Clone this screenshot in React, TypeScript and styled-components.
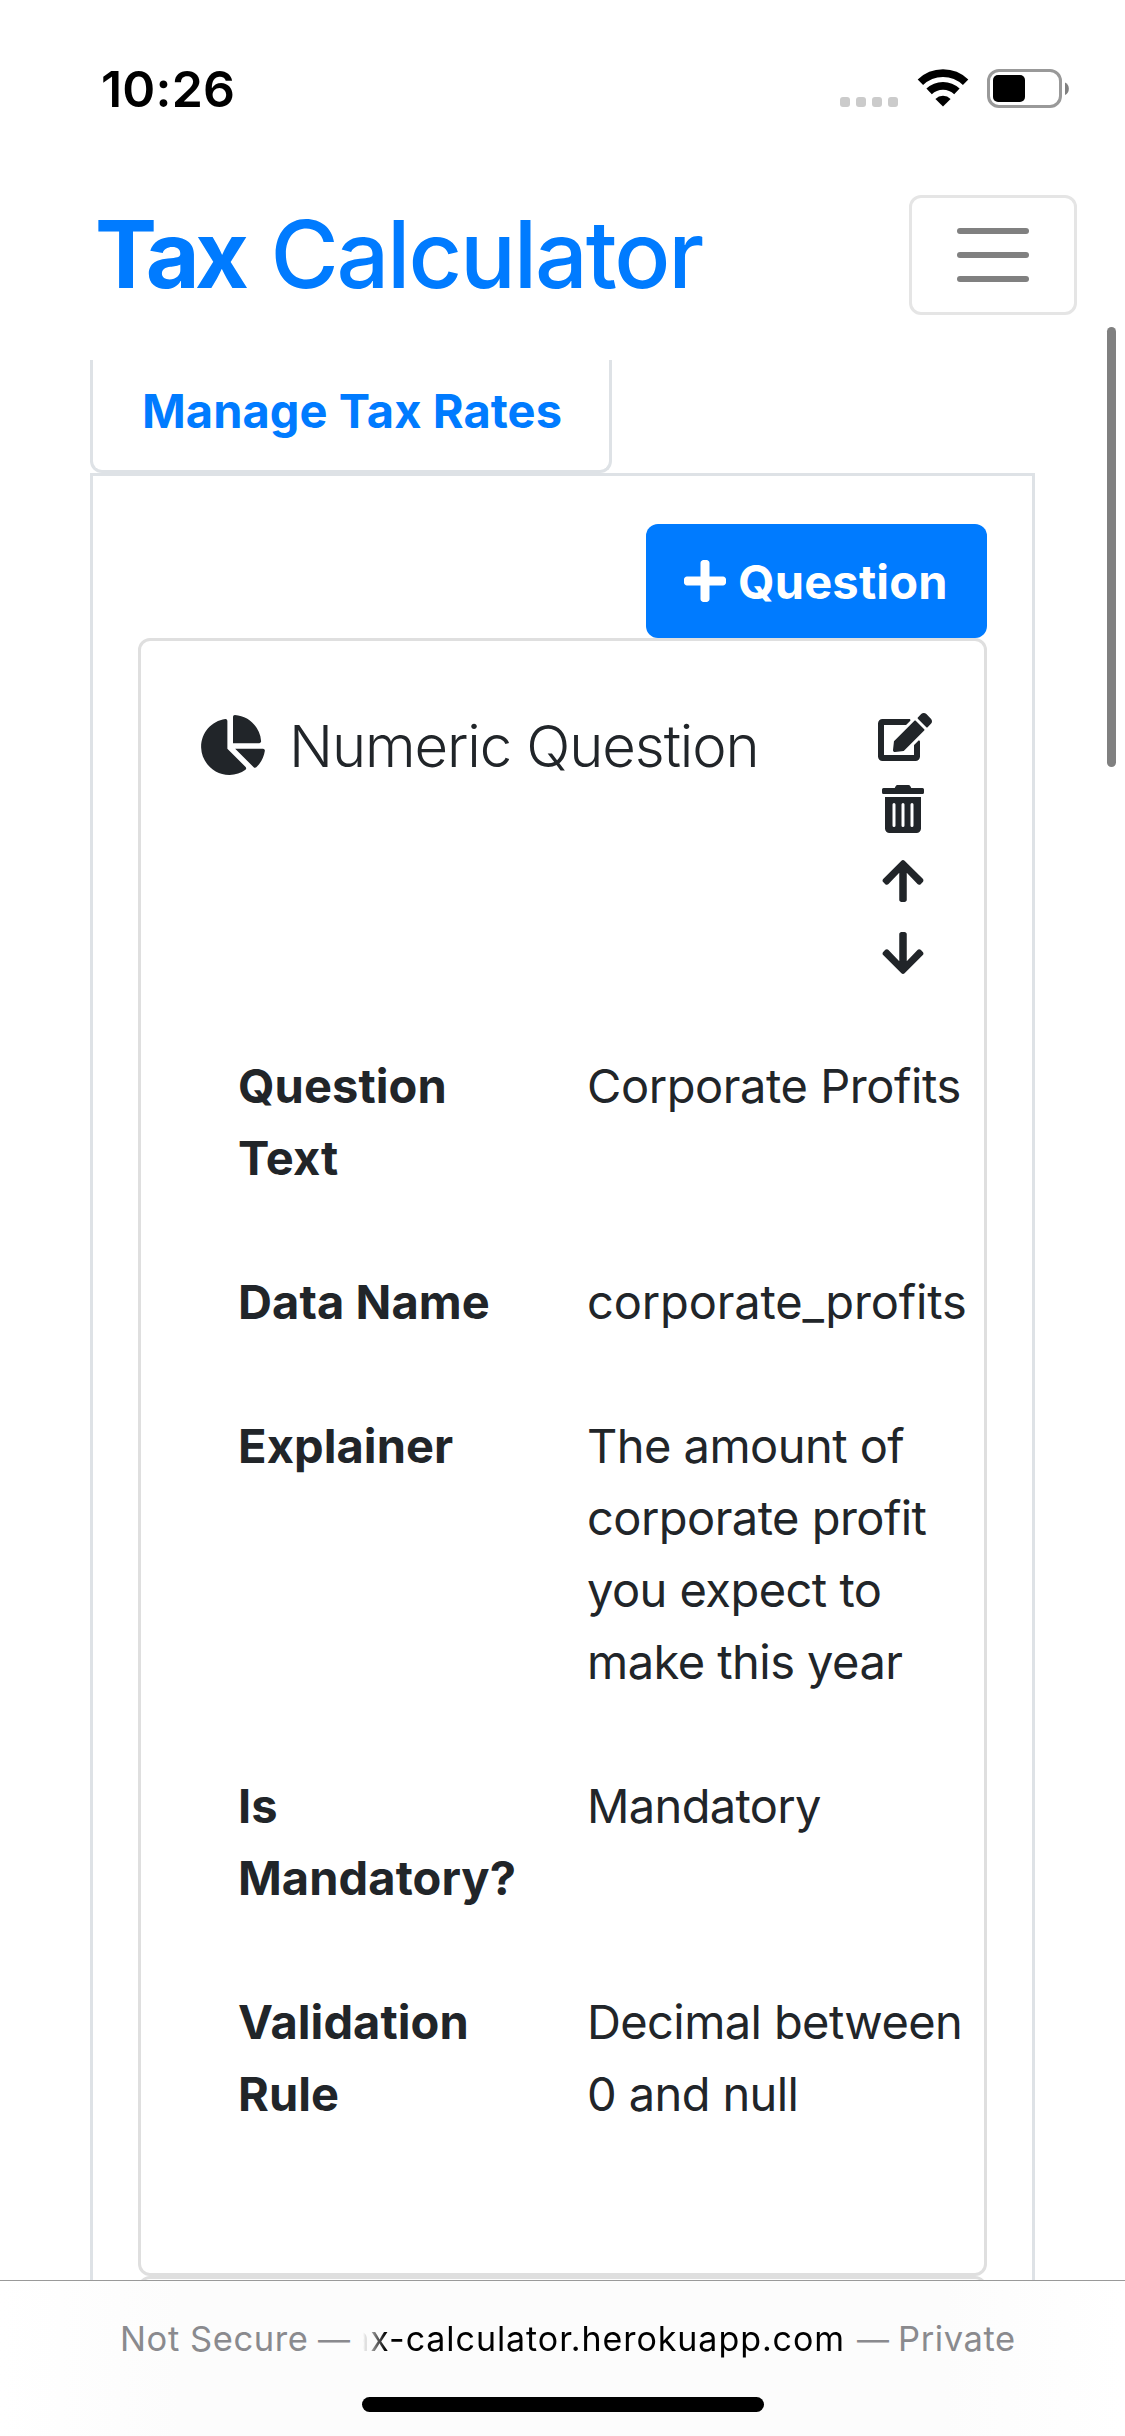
import React from "react";
import styled, { createGlobalStyle } from "styled-components";
import { FaPlus, FaChartPie, FaEdit, FaTrashAlt, FaArrowUp, FaArrowDown } from "react-icons/fa";

const GlobalStyle = createGlobalStyle`
  *, *::before, *::after { box-sizing: border-box; }
  body {
    margin: 0;
    background: #fff;
    color: #212529;
    font-family: Inter, "Liberation Sans", sans-serif;
  }
`;

const Screen = styled.div`
  position: relative;
  display: flex;
  flex-direction: column;
  width: 1125px;
  height: 2436px;
  overflow: hidden;
  background: #fff;
`;

const StatusBar = styled.header`
  display: flex;
  justify-content: space-between;
  flex: none;
  height: 132px;
  padding: 59px 56px 0 101px;
  color: #000;
`;

const Clock = styled.span`
  font-size: 50px;
  font-weight: 600;
  line-height: 60px;
  letter-spacing: 0.19px;
`;

const StatusIcons = styled.div`
  display: flex;
  align-items: flex-end;
  height: 50px;
`;

const Signal = styled.div`
  display: flex;
  gap: 6px;
  margin: 0 19px 2px 0;
`;

const SignalDot = styled.i`
  width: 10px;
  height: 10px;
  border-radius: 3px;
  background: #cbcbcb;
`;

const WifiGlyph = styled.svg`
  width: 52px;
  height: 38px;
  margin: 0 18px 2px 0;
`;

const BatteryGlyph = styled.svg`
  width: 82px;
  height: 39px;
  margin-bottom: 1px;
`;

const NavBar = styled.nav`
  display: flex;
  align-items: flex-start;
  justify-content: space-between;
  flex: none;
  height: 228px;
  padding: 50px 48px 0 95px;
`;

const Brand = styled.a`
  display: flex;
  gap: 26px;
  color: #007bff;
  font-size: 93px;
  font-weight: 500;
  line-height: 144px;
  letter-spacing: -2.15px;
  white-space: nowrap;
`;

const BrandStrong = styled.b`
  font-weight: 700;
  letter-spacing: -4.6px;
`;

const Toggler = styled.button`
  display: flex;
  flex-direction: column;
  align-items: center;
  justify-content: center;
  gap: 18px;
  width: 168px;
  height: 120px;
  margin-top: 13px;
  padding: 0;
  border: 3px solid #e5e5e5;
  border-radius: 12px;
  background: #fff;
`;

const TogglerBar = styled.i`
  width: 72px;
  height: 6px;
  border-radius: 3px;
  background: #808080;
`;

const Viewport = styled.main`
  display: flex;
  flex-direction: column;
  align-items: flex-start;
  flex: 1;
  min-height: 0;
  padding: 0 90px;
  overflow: hidden;
`;

const Tab = styled.a`
  flex: none;
  width: 522px;
  height: 113px;
  padding: 15px 0 0 49px;
  border: 3px solid #dee2e6;
  border-top: 0;
  border-radius: 0 0 12px 12px;
  color: #007bff;
  font-size: 47px;
  font-weight: 700;
  line-height: 72px;
  letter-spacing: 0.06px;
  white-space: nowrap;
`;

const Panel = styled.section`
  display: flex;
  flex-direction: column;
  align-items: flex-end;
  flex: none;
  width: 945px;
  padding: 48px 45px;
  border: 3px solid #dee2e6;
`;

const AddButton = styled.button`
  display: flex;
  align-items: center;
  gap: 12px;
  width: 341px;
  height: 114px;
  padding: 0 0 0 38px;
  border: 0;
  border-radius: 12px;
  background: #007bff;
  color: #fff;
  font: 700 47px/72px Inter, "Liberation Sans", sans-serif;
  letter-spacing: 0.2px;

  svg {
    width: 42px;
    height: 48px;
  }
`;

const ButtonText = styled.span`
  padding-top: 1px;
`;

const Card = styled.article`
  width: 849px;
  height: 1638px;
  padding: 69px 0 0 60px;
  border: 3px solid #dfdfdf;
  border-radius: 12px;
`;

const CardHead = styled.div`
  display: flex;
  align-items: flex-start;
  justify-content: space-between;
  height: 340px;
  padding-right: 52px;
`;

const CardTitle = styled.h3`
  display: flex;
  align-items: center;
  gap: 24px;
  margin: 0;
  font-size: 58px;
  font-weight: 300;
  line-height: 72px;
  letter-spacing: -1.1px;
  white-space: nowrap;

  svg {
    width: 64px;
    height: 60px;
    margin-top: -2px;
  }
`;

const Actions = styled.div`
  display: flex;
  flex-direction: column;
  gap: 24px;
  padding-top: 3px;
`;

const Action = styled.span<{ $width: number }>`
  display: flex;
  height: 48px;
  padding-left: ${(p) => (p.$width < 54 ? 4 : 0)}px;

  svg {
    width: ${(p) => p.$width}px;
    height: 48px;
  }
`;

const Details = styled.dl`
  display: grid;
  grid-template-columns: 349px 397px;
  row-gap: 72px;
  margin: 0;
  padding-left: 37px;
  font-size: 47px;
  line-height: 72px;
  white-space: pre-line;
`;

const Label = styled.dt`
  font-weight: 700;
  letter-spacing: 0.08px;
`;

const Value = styled.dd<{ $spacing: number }>`
  margin: 0;
  letter-spacing: ${(p) => p.$spacing}px;
`;

const NextCard = styled.article`
  width: 849px;
  height: 120px;
  border: 3px solid #dfdfdf;
  border-radius: 12px;
`;

const ScrollThumb = styled.div`
  position: absolute;
  top: 327px;
  right: 9px;
  width: 9px;
  height: 440px;
  border-radius: 5px;
  background: #808080;
`;

const BrowserBar = styled.footer`
  display: flex;
  flex-direction: column;
  align-items: center;
  flex: none;
  height: 156px;
  padding-top: 37px;
  border-top: 1px solid #999;
  background: linear-gradient(90deg, #fff 0, #fcfcfc 16%, #fcfcfc 84%, #fff 100%);
`;

const Address = styled.div`
  display: flex;
  align-items: baseline;
  width: 100%;
  height: 42px;
  padding-left: 120px;
  color: #8a8a8e;
  font-size: 34.5px;
  line-height: 42px;
  white-space: nowrap;
`;

const Note = styled.span<{ $width: number }>`
  width: ${(p) => p.$width}px;
  letter-spacing: 0.6px;
`;

const Dash = styled.span<{ $width: number }>`
  width: ${(p) => p.$width}px;
  font-size: 32px;
`;

const Host = styled.span`
  width: 496px;
  margin-right: 12px;
  color: #000;
  font-size: 34px;
  letter-spacing: 0.93px;
  text-align: right;
  mask-image: linear-gradient(90deg, transparent 14px, #000 37px);
`;

const HomeIndicator = styled.div`
  width: 402px;
  height: 15px;
  margin-top: 37px;
  border-radius: 8px;
  background: #000;
`;

const details = [
  { label: "Question\nText", value: "Corporate Profits", spacing: -0.43 },
  { label: "Data Name", value: "corporate_profits", spacing: -0.15 },
  { label: "Explainer", value: "The amount of\ncorporate profit\nyou expect to\nmake this year", spacing: -0.54 },
  { label: "Is\nMandatory?", value: "Mandatory", spacing: -0.66 },
  { label: "Validation\nRule", value: "Decimal between\n0 and null", spacing: -0.6 },
];

export default function App() {
  return (
    <Screen>
      <GlobalStyle />
      <StatusBar>
        <Clock>10:26</Clock>
        <StatusIcons>
          <Signal>
            <SignalDot />
            <SignalDot />
            <SignalDot />
            <SignalDot />
          </Signal>
          <WifiGlyph viewBox="0 0 52 38">
            <g fill="none" stroke="#000" strokeWidth="7.8">
              <path d="M3.4 13.2A32.5 32.5 0 0 1 48.6 13.2" />
              <path d="M12.1 22.4A20 20 0 0 1 39.9 22.4" />
            </g>
            <path d="M26 37.5 18.4 29.9A11 11 0 0 1 33.6 29.9Z" fill="#000" />
          </WifiGlyph>
          <BatteryGlyph viewBox="0 0 82 39">
            <rect x="1.5" y="1.5" width="72" height="36" rx="10.5" fill="none" stroke="#999" strokeWidth="3" />
            <rect x="6" y="6" width="32" height="27" rx="5" fill="#000" />
            <path d="M78 13.5a7 7 0 0 1 0 12.5Z" fill="#808080" />
          </BatteryGlyph>
        </StatusIcons>
      </StatusBar>
      <NavBar>
        <Brand>
          <BrandStrong>Tax</BrandStrong>
          <span>Calculator</span>
        </Brand>
        <Toggler aria-label="Toggle navigation">
          <TogglerBar />
          <TogglerBar />
          <TogglerBar />
        </Toggler>
      </NavBar>
      <Viewport>
        <Tab>Manage Tax Rates</Tab>
        <Panel>
          <AddButton>
            <FaPlus />
            <ButtonText>Question</ButtonText>
          </AddButton>
          <Card>
            <CardHead>
              <CardTitle>
                <FaChartPie />
                Numeric Question
              </CardTitle>
              <Actions>
                <Action $width={54}><FaEdit /></Action>
                <Action $width={42}><FaTrashAlt /></Action>
                <Action $width={42}><FaArrowUp /></Action>
                <Action $width={42}><FaArrowDown /></Action>
              </Actions>
            </CardHead>
            <Details>
              {details.map((row) => (
                <React.Fragment key={row.label}>
                  <Label>{row.label}</Label>
                  <Value $spacing={row.spacing}>{row.value}</Value>
                </React.Fragment>
              ))}
            </Details>
          </Card>
          <NextCard />
        </Panel>
      </Viewport>
      <BrowserBar>
        <Address>
          <Note $width={198}>Not Secure</Note>
          <Dash $width={31}>—</Dash>
          <Host>ax-calculator.herokuapp.com</Host>
          <Dash $width={41}>—</Dash>
          <Note $width={120}>Private</Note>
        </Address>
        <HomeIndicator />
      </BrowserBar>
      <ScrollThumb />
    </Screen>
  );
}
